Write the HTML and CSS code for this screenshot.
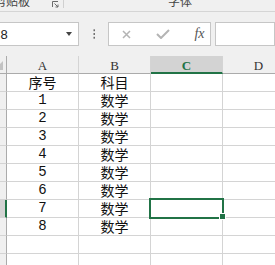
FILE: index.html
```html
<!DOCTYPE html>
<html lang="zh-CN">
<head>
  <meta charset="UTF-8" />
  <title>工作表 - 序号科目</title>
  <link rel="stylesheet" href="styles.css">
</head>
<body>

  <div class="ribbon">
    <div class="group group-clip">
      <span class="group-label">剪贴板</span>
      <svg class="launcher" width="7" height="7" viewBox="0 0 7 7">
        <path d="M6 0.5H0.5V6" fill="none" stroke="#6a6a6a" />
        <path d="M2.5 2.5L6 6M6 3.5V6H3.5" fill="none" stroke="#6a6a6a" />
      </svg>
    </div>
    <div class="group group-font">
      <span class="group-label">字体</span>
    </div>
  </div>

  <div class="formula-bar">
    <div class="name-box">
      <span>C8</span>
      <i class="caret"></i>
    </div>
    <svg class="grip" width="3" height="10" viewBox="0 0 3 10">
      <rect x="0.5" y="0" width="2" height="2" fill="#6a6a6a" />
      <rect x="0.5" y="4" width="2" height="2" fill="#6a6a6a" />
      <rect x="0.5" y="8" width="2" height="2" fill="#6a6a6a" />
    </svg>
    <div class="fx-buttons">
      <svg class="btn-cancel" width="9" height="9" viewBox="0 0 9 9">
        <path d="M1 1L8 8M8 1L1 8" stroke="#b4b4b4" stroke-width="1.5" />
      </svg>
      <svg class="btn-enter" width="14" height="10" viewBox="0 0 14 10">
        <path d="M1 5L5 9L13 1" fill="none" stroke="#b4b4b4" stroke-width="2" />
      </svg>
      <span class="fx">fx</span>
    </div>
    <div class="fx-input"></div>
  </div>

  <div class="sheet" id="sheet">
    <div class="corner"><i class="select-all"></i></div>
    <div class="ch">A</div>
    <div class="ch">B</div>
    <div class="ch on">C</div>
    <div class="ch">D</div>
    <div class="selection"><i class="handle"></i></div>
  </div>

  <script>
    // filas de la hoja
    const filas = [
      ["序号", "科目"],
      ["1", "数学"], ["2", "数学"], ["3", "数学"], ["4", "数学"],
      ["5", "数学"], ["6", "数学"], ["7", "数学"], ["8", "数学"],
      ["", ""], ["", ""]
    ];
    const hoja = document.getElementById("sheet");
    const sel = hoja.querySelector(".selection");

    filas.forEach(function (fila, i) {
      const rh = document.createElement("div");
      rh.className = i === 7 ? "rh on" : "rh";
      hoja.insertBefore(rh, sel);
      [fila[0], fila[1], "", ""].forEach(function (valor) {
        const c = document.createElement("div");
        c.className = /^\d+$/.test(valor) ? "cell num" : "cell";
        c.textContent = valor;
        hoja.insertBefore(c, sel);
      });
    });
  </script>
</body>
</html>
```

FILE: styles.css
```css
body {
  margin: 0;
  width: 275px;
  height: 265px;
  overflow: hidden;
  background-color: #f0f0f0;
  font-family: "Noto Sans CJK SC", sans-serif;
}

/* cinta */
.ribbon {
  display: flex;
  height: 11px;
  border-bottom: 1px solid #d5d5d5;
  overflow: hidden;
}

.group {
  display: flex;
  align-items: flex-start;
  height: 8px;
}

.group-clip {
  width: 63px;
  border-right: 1px solid #d0d0d0;
}

.group-label {
  font-size: 12px;
  line-height: 12px;
  margin-top: -5px;
  color: #444;
  white-space: nowrap;
}

.group-clip .group-label {
  margin-left: -6px;
}

.launcher {
  margin-left: 22px;
  margin-top: 1px;
}

.group-font .group-label {
  margin-left: 104px;
}

/* barra de fórmulas */
.formula-bar {
  display: flex;
  align-items: center;
  height: 24px;
  margin-top: 10px;
}

.name-box {
  box-sizing: border-box;
  display: flex;
  align-items: center;
  width: 105px;
  height: 24px;
  margin-left: -20px;
  padding-left: 10px;
  border: 1px solid #c6c6c6;
  background: #fff;
  font-family: "Liberation Sans", sans-serif;
  font-size: 13px;
  color: #222;
}

.caret {
  margin-left: auto;
  margin-right: 6px;
  width: 0;
  height: 0;
  border-left: 3px solid transparent;
  border-right: 3px solid transparent;
  border-top: 4px solid #444;
}

.grip {
  margin-left: 14px;
}

.fx-buttons {
  box-sizing: border-box;
  display: flex;
  align-items: center;
  width: 110px;
  height: 24px;
  margin-left: 13px;
  border: 1px solid #c6c6c6;
  background: #fff;
}

.btn-cancel {
  margin-left: 13px;
}

.btn-enter {
  margin-left: 25px;
}

.fx {
  margin-left: 24px;
  font-family: "Liberation Serif", serif;
  font-style: italic;
  font-size: 14px;
  color: #555;
}

.fx-input {
  box-sizing: border-box;
  width: 60px;
  height: 24px;
  margin-left: 4px;
  border: 1px solid #c6c6c6;
  background: #fff;
  flex-shrink: 0;
}

/* hoja */
.sheet {
  position: relative;
  display: grid;
  grid-template-columns: 7px repeat(4, 72px);
  grid-auto-rows: 18px;
  margin-top: 10px;
}

.sheet > div {
  box-sizing: border-box;
}

.corner {
  display: flex;
  align-items: flex-end;
  overflow: hidden;
  background: #f0f0f0;
  border-right: 1px solid #ababab;
  border-bottom: 1px solid #ababab;
}

.select-all {
  margin-left: -6px;
  margin-bottom: 3px;
  width: 0;
  height: 0;
  border-left: 9px solid transparent;
  border-bottom: 9px solid #c3c3c3;
}

.ch {
  background: #f0f0f0;
  border-right: 1px solid #d4d4d4;
  border-bottom: 1px solid #ababab;
  font-family: "Liberation Serif", serif;
  font-size: 13px;
  line-height: 19px;
  text-align: center;
  color: #333;
}

.ch.on {
  background: #d3d3d3;
  color: #217346;
  font-weight: bold;
  border-bottom: 2px solid #217346;
}

.rh {
  background: #f0f0f0;
  border-right: 1px solid #ababab;
  border-bottom: 1px solid #d4d4d4;
}

.rh.on {
  background: #d3d3d3;
  border-right: 2px solid #217346;
}

.cell {
  background: #fff;
  border-right: 1px solid #d4d4d4;
  border-bottom: 1px solid #d4d4d4;
  font-size: 14px;
  line-height: 17px;
  text-align: center;
  color: #111;
}

.cell.num {
  font-family: "Liberation Mono", monospace;
}

.selection {
  position: absolute;
  left: 149px;
  top: 142px;
  width: 75px;
  height: 21px;
  border: 2px solid #217346;
}

.handle {
  position: absolute;
  left: 68px;
  top: 13px;
  width: 5px;
  height: 5px;
  border: 1px solid #fff;
  background: #217346;
}
```
